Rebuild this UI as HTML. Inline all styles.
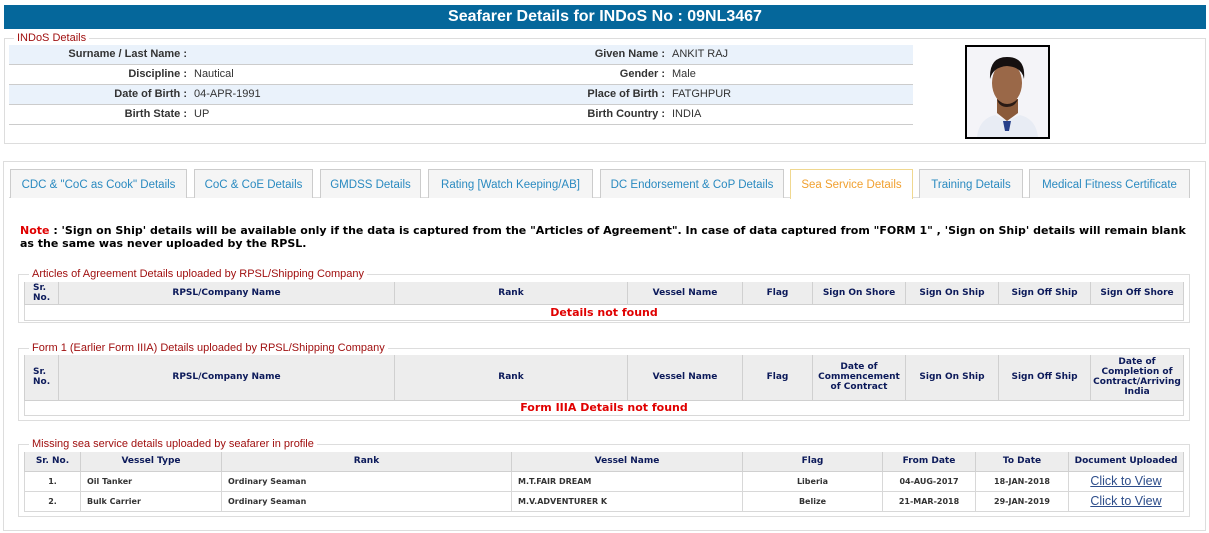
<!DOCTYPE html>
<html><head><meta charset="utf-8"><style>
*{box-sizing:border-box;margin:0;padding:0}
body{width:1209px;height:533px;background:#fff;font-family:"Liberation Sans",Arial,sans-serif;font-size:11px;color:#333;position:relative;overflow:hidden}
.abs{position:absolute}
.hdr{left:4px;top:5px;width:1202px;height:24px;background:#05679b;color:#fff;font-weight:bold;font-size:16px;text-align:center;line-height:24px}
.fs{border:1px solid #ddd}
.leg{background:#fff;color:#a01010;padding:0 3px;font-size:11px;line-height:12px}
.row{left:9px;width:904px;height:20px;border-bottom:1px solid #ccc;line-height:19px}
.row.s{background:#eaf2fb}
.lb{position:absolute;text-align:right;font-weight:bold;color:#333}
.vl{position:absolute}
.tab{top:169px;height:29px;border:1px solid #ccc;border-bottom:none;background:#f5f5f5;color:#2a8ac0;font-size:11.5px;text-align:center;line-height:30px}
.tab.a{border-color:#f0d890;background:#fff;color:#f0a030}
table{position:absolute;border-collapse:collapse;font-family:"DejaVu Sans",Verdana,sans-serif;font-size:9px}
th{background:#ededed;color:#0c1a5a;font-weight:bold;border:1px solid #d0d0d0;border-top:none;line-height:10px}
td{border:1px solid #d8d8d8;font-weight:bold;color:#333;font-size:8px;padding-left:6px}
.nf{color:#e00000;font-size:11px;text-align:center;padding:0}
a{color:#2d4d8a;font-family:"Liberation Sans",Arial,sans-serif;font-size:12.5px;font-weight:normal;text-decoration:underline}
</style></head><body>
<div class="abs hdr">Seafarer Details for INDoS No : 09NL3467</div>

<div class="abs fs" style="left:4px;top:38px;width:1202px;height:106px"></div>
<div class="abs leg" style="left:14px;top:32px">INDoS Details</div>
<div class="abs row s" style="top:45px"><span class="lb" style="right:726px">Surname / Last Name :</span><span class="lb" style="left:400px;width:256px">Given Name :</span><span class="vl" style="left:663px">ANKIT RAJ</span></div>
<div class="abs row" style="top:65px"><span class="lb" style="right:726px">Discipline :</span><span class="vl" style="left:185px">Nautical</span><span class="lb" style="left:400px;width:256px">Gender :</span><span class="vl" style="left:663px">Male</span></div>
<div class="abs row s" style="top:85px"><span class="lb" style="right:726px">Date of Birth :</span><span class="vl" style="left:185px">04-APR-1991</span><span class="lb" style="left:400px;width:256px">Place of Birth :</span><span class="vl" style="left:663px">FATGHPUR</span></div>
<div class="abs row" style="top:105px"><span class="lb" style="right:726px">Birth State :</span><span class="vl" style="left:185px">UP</span><span class="lb" style="left:400px;width:256px">Birth Country :</span><span class="vl" style="left:663px">INDIA</span></div>
<div class="abs" style="left:965px;top:45px;width:85px;height:94px;border:2px solid #000;background:#f4f4f8;overflow:hidden">
<svg width="81" height="90" viewBox="0 0 81 90"><path d="M10 90 Q12 72 28 68 L40 74 L53 68 Q69 72 71 90Z" fill="#e8ecf4"/><path d="M36 74 L44 74 L42 84 L38 84Z" fill="#27408a"/><path d="M30 52 L30 66 L40 74 L51 66 L51 52Z" fill="#8a5a3a"/><ellipse cx="40" cy="36" rx="15" ry="21" fill="#9a6848"/><path d="M23 32 Q22 10 40 10 Q59 10 57 32 Q55 20 40 19 Q26 20 23 32Z" fill="#151010"/><path d="M30 52 Q40 62 51 52 Q48 60 40 60 Q32 60 30 52Z" fill="#2a1a14"/></svg></div>

<div class="abs fs" style="left:3px;top:161px;width:1203px;height:370px"></div>
<div class="abs" style="left:9px;top:197px;width:1181px;border-top:1px solid #ddd"></div>
<div class="abs tab" style="left:10px;width:177px">CDC &amp; "CoC as Cook" Details</div>
<div class="abs tab" style="left:194px;width:119px">CoC &amp; CoE Details</div>
<div class="abs tab" style="left:320px;width:101px">GMDSS Details</div>
<div class="abs tab" style="left:428px;width:165px">Rating [Watch Keeping/AB]</div>
<div class="abs tab" style="left:600px;width:184px">DC Endorsement &amp; CoP Details</div>
<div class="abs tab a" style="left:790px;width:123px;height:30px">Sea Service Details</div>
<div class="abs tab" style="left:919px;width:104px">Training Details</div>
<div class="abs tab" style="left:1029px;width:161px">Medical Fitness Certificate</div>

<div class="abs" style="left:20px;top:224px;width:1180px;white-space:nowrap;font-family:'DejaVu Sans',Verdana,sans-serif;font-weight:bold;font-size:11px;line-height:13px;color:#000;letter-spacing:0"><span style="color:#e00000">Note</span> : 'Sign on Ship' details will be available only if the data is captured from the "Articles of Agreement". In case of data captured from "FORM 1" , 'Sign on Ship' details will remain blank<br>as the same was never uploaded by the RPSL.</div>

<div class="abs fs" style="left:18px;top:274px;width:1172px;height:49px"></div>
<div class="abs leg" style="left:29px;top:268px">Articles of Agreement Details uploaded by RPSL/Shipping Company</div>
<table style="left:24px;top:282px;width:1160px">
<tr style="height:22px"><th style="width:34px;text-align:left;padding-left:8px">Sr.<br>No.</th><th style="width:336px">RPSL/Company Name</th><th style="width:233px">Rank</th><th style="width:115px">Vessel Name</th><th style="width:70px">Flag</th><th style="width:93px">Sign On Shore</th><th style="width:93px">Sign On Ship</th><th style="width:92px">Sign Off Ship</th><th>Sign Off Shore</th></tr>
<tr style="height:16px"><td colspan="9" class="nf">Details not found</td></tr></table>

<div class="abs fs" style="left:18px;top:348px;width:1172px;height:73px"></div>
<div class="abs leg" style="left:29px;top:342px">Form 1 (Earlier Form IIIA) Details uploaded by RPSL/Shipping Company</div>
<table style="left:24px;top:355px;width:1160px">
<tr style="height:45px"><th style="width:34px;text-align:left;padding-left:8px">Sr.<br>No.</th><th style="width:336px">RPSL/Company Name</th><th style="width:233px">Rank</th><th style="width:115px">Vessel Name</th><th style="width:70px">Flag</th><th style="width:93px">Date of<br>Commencement<br>of Contract</th><th style="width:93px">Sign On Ship</th><th style="width:92px">Sign Off Ship</th><th>Date of<br>Completion of<br>Contract/Arriving<br>India</th></tr>
<tr style="height:15px"><td colspan="9" class="nf">Form IIIA Details not found</td></tr></table>

<div class="abs fs" style="left:18px;top:444px;width:1172px;height:73px"></div>
<div class="abs leg" style="left:29px;top:438px">Missing sea service details uploaded by seafarer in profile</div>
<table style="left:24px;top:452px;width:1160px">
<tr style="height:19px"><th style="width:56px">Sr. No.</th><th style="width:141px">Vessel Type</th><th style="width:290px">Rank</th><th style="width:231px">Vessel Name</th><th style="width:140px">Flag</th><th style="width:93px">From Date</th><th style="width:93px">To Date</th><th>Document Uploaded</th></tr>
<tr style="height:20px"><td style="text-align:center;padding:0">1.</td><td>Oil Tanker</td><td>Ordinary Seaman</td><td>M.T.FAIR DREAM</td><td style="text-align:center;padding:0">Liberia</td><td style="text-align:center;padding:0">04-AUG-2017</td><td style="text-align:center;padding:0">18-JAN-2018</td><td style="text-align:center;padding:0"><a>Click to View</a></td></tr>
<tr style="height:20px"><td style="text-align:center;padding:0">2.</td><td>Bulk Carrier</td><td>Ordinary Seaman</td><td>M.V.ADVENTURER K</td><td style="text-align:center;padding:0">Belize</td><td style="text-align:center;padding:0">21-MAR-2018</td><td style="text-align:center;padding:0">29-JAN-2019</td><td style="text-align:center;padding:0"><a>Click to View</a></td></tr></table>
</body></html>
